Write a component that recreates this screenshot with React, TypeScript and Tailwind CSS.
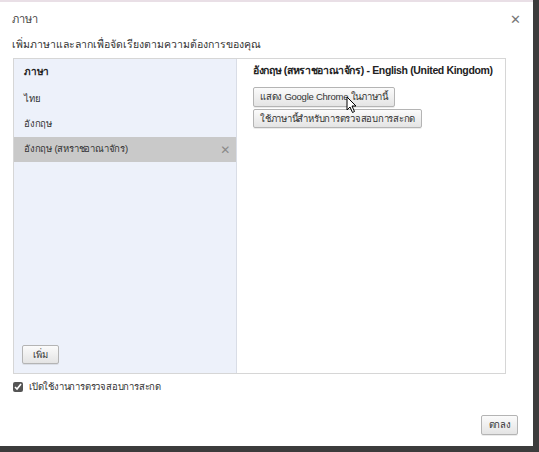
import React from 'react';

const font = "font-['Liberation_Sans','Noto_Sans','DejaVu_Sans',sans-serif]";

const Btn: React.FC<{ children: React.ReactNode; className?: string }> = ({ children, className = '' }) => (
  <button
    className={`flex items-center whitespace-nowrap px-[6px] border border-[#b4b4b4] rounded-[2px] bg-gradient-to-b from-[#fbfbfb] to-[#e4e4e4] text-[9.5px] tracking-[-0.25px] text-[#333] leading-none shadow-[0_1px_0_rgba(0,0,0,0.08)] ${className}`}
  >
    {children}
  </button>
);

export default function App() {
  return (
    <div className={`w-[539px] h-[452px] bg-[#3c3c3c] ${font}`}>
      <div className="w-[533px] h-[446px] bg-white flex flex-col border-t-2 border-[#e9dfe6]">
        {/* Title */}
        <div className="flex items-center justify-between h-[32px] pl-[12px] pr-[12px] pt-[2px]">
          <span className="text-[11px] text-[#444]">ภาษา</span>
          <span className="text-[13px] text-[#777] leading-none">✕</span>
        </div>
        <div className="pl-[12px] h-[22px] flex items-center text-[10.5px] text-[#333] whitespace-nowrap">
          เพิ่มภาษาและลากเพื่อจัดเรียงตามความต้องการของคุณ
        </div>

        {/* Main box */}
        <div className="ml-[13px] mt-[2px] w-[493px] h-[316px] border border-[#d6d6d6] flex">
          <div className="w-[223px] shrink-0 bg-[#edf1fa] flex flex-col border-r border-[#d9dde6] text-[9.5px] tracking-[-0.2px]">
            <div className="h-[28px] pl-[10px] flex items-end pb-[8px] text-[10px] font-bold text-[#222]">ภาษา</div>
            <div className="h-[25px] pl-[10px] flex items-center text-[#333]">ไทย</div>
            <div className="h-[25px] pl-[10px] flex items-center text-[#333]">อังกฤษ</div>
            <div className="h-[25px] pl-[10px] pr-[6px] flex items-center justify-between bg-[#c9c9c9] text-[#333]">
              <span>อังกฤษ (สหราชอาณาจักร)</span>
              <span className="text-[12px] text-[#8a8a8a] leading-none">✕</span>
            </div>
            <div className="flex-1" />
            <div className="pl-[8px] pb-[9px]">
              <Btn className="h-[19px] w-[37px] justify-center">เพิ่ม</Btn>
            </div>
          </div>
          <div className="flex-1 bg-white flex flex-col pl-[16px]">
            <div className="h-[28px] flex items-end pb-[8px] text-[10.5px] font-bold text-[#222] whitespace-nowrap tracking-[-0.35px]">
              อังกฤษ (สหราชอาณาจักร) - English (United Kingdom)
            </div>
            <div className="relative w-fit">
              <Btn className="h-[20px]">แสดง Google Chrome ในภาษานี้</Btn>
              <svg className="absolute left-[93px] top-[9px]" width="12" height="18" viewBox="0 0 12 18">
                <path d="M1 1 L1 14 L4 11 L6.5 16.5 L8.5 15.5 L6 10 L10 10 Z" fill="#fff" stroke="#000" strokeWidth="1" />
              </svg>
            </div>
            <Btn className="h-[19px] w-fit mt-[2px]">ใช้ภาษานี้สำหรับการตรวจสอบการสะกด</Btn>
          </div>
        </div>

        {/* Spellcheck */}
        <div className="ml-[13px] mt-[6px] flex items-center gap-[6px]">
          <input type="checkbox" defaultChecked className="w-[10px] h-[10px] m-0 accent-[#555]" />
          <span className="text-[9.5px] tracking-[-0.2px] text-[#333]">เปิดใช้งานการตรวจสอบการสะกด</span>
        </div>

        <div className="flex-1" />
        <div className="flex justify-end pr-[15px] pb-[11px]">
          <Btn className="h-[20px] w-[37px] justify-center">ตกลง</Btn>
        </div>
      </div>
    </div>
  );
}
